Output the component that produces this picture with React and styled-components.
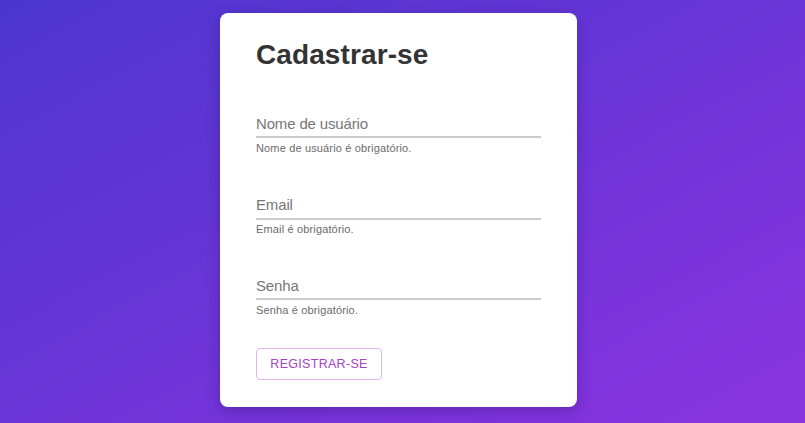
import React from "react";
import styled, { createGlobalStyle } from "styled-components";

const GlobalStyle = createGlobalStyle`
  html, body { margin: 0; padding: 0; }
  body {
    font-family: "Liberation Sans", Arial, sans-serif;
    background: linear-gradient(to bottom right, #4c36cf, #8b33e1);
    min-height: 423px;
  }
  * { box-sizing: border-box; }
`;

const Page = styled.div`
  min-height: 423px;
  display: flex;
  justify-content: center;
  align-items: flex-start;
  padding: 13px 8px 16px 0;
`;

const Card = styled.form`
  width: 357px;
  background: #ffffff;
  border-radius: 8px;
  box-shadow: 0 4px 14px rgba(20, 0, 60, 0.25);
  padding: 26px 36px 27px;
  display: flex;
  flex-direction: column;
`;

const Title = styled.h1`
  margin: 0 0 39px;
  font-size: 28px;
  line-height: 32px;
  font-weight: 700;
  letter-spacing: 0.1px;
  color: #333333;
`;

const Field = styled.div`
  display: flex;
  flex-direction: column;
  margin-bottom: ${(p) => p.$gap}px;
`;

const Input = styled.input`
  box-sizing: content-box;
  width: 285px;
  height: 17px;
  padding: 4.5px 0 4.5px;
  margin: 0;
  border: none;
  border-bottom: 2px solid #cccccc;
  outline: none;
  background: transparent;
  font-family: "Liberation Sans", Arial, sans-serif;
  font-size: 15px;
  line-height: 17px;
  letter-spacing: -0.15px;
  color: #333;
  &::placeholder { color: #777777; opacity: 1; }
`;

const Helper = styled.span`
  margin-top: 3.5px;
  font-size: 11px;
  line-height: 13px;
  letter-spacing: 0.15px;
  color: #6a6a6a;
`;

const Button = styled.button`
  align-self: flex-start;
  width: 126px;
  height: 32px;
  padding: 0;
  border: 1px solid #e2b6ec;
  border-radius: 4px;
  background: #ffffff;
  color: #a243c2;
  font-family: "Liberation Sans", Arial, sans-serif;
  font-size: 12.5px;
  letter-spacing: 0.3px;
  text-transform: uppercase;
  cursor: pointer;
`;

const fields = [
  { ph: "Nome de usuário", type: "text", help: "Nome de usuário é obrigatório.", gap: 37 },
  { ph: "Email", type: "email", help: "Email é obrigatório.", gap: 36 },
  { ph: "Senha", type: "password", help: "Senha é obrigatório.", gap: 31 },
];

export default function App() {
  return (
    <>
      <GlobalStyle />
      <Page>
        <Card onSubmit={(e) => e.preventDefault()}>
          <Title>Cadastrar-se</Title>
          {fields.map((f) => (
            <Field key={f.ph} $gap={f.gap}>
              <Input type={f.type} placeholder={f.ph} />
              <Helper>{f.help}</Helper>
            </Field>
          ))}
          <Button type="submit">Registrar-se</Button>
        </Card>
      </Page>
    </>
  );
}
